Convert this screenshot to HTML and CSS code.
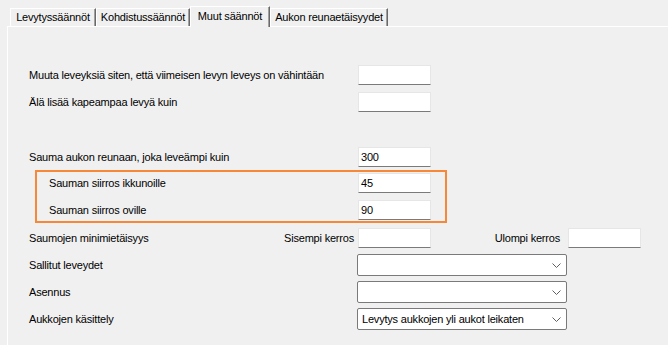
FILE: index.html
```html
<!DOCTYPE html>
<html lang="fi">
<head>
    <meta charset="UTF-8">
    <title>Muut säännöt</title>
    <link rel="stylesheet" href="styles.css">
</head>
<body>
    <div class="tabs">
        <span class="tab t1">Levytyssäännöt</span>
        <span class="tab t2">Kohdistussäännöt</span>
        <span class="tab t3 active">Muut säännöt</span>
        <span class="tab t4">Aukon reunaetäisyydet</span>
    </div>
    <div class="panel">
        <div class="row first">
            <label>Muuta leveyksiä siten, että viimeisen levyn leveys on vähintään</label>
            <input class="field" type="text" value="">
        </div>
        <div class="row">
            <label>Älä lisää kapeampaa levyä kuin</label>
            <input class="field" type="text" value="">
        </div>
        <div class="row spaced">
            <label>Sauma aukon reunaan, joka leveämpi kuin</label>
            <input class="field" type="text" value="300">
        </div>
        <div class="highlight">
            <div class="row inner">
                <label>Sauman siirros ikkunoille</label>
                <input class="field" type="text" value="45">
            </div>
            <div class="row">
                <label>Sauman siirros oville</label>
                <input class="field" type="text" value="90">
            </div>
        </div>
        <div class="row after-box">
            <label class="short">Saumojen minimietäisyys</label>
            <span class="sub sub-in">Sisempi kerros</span>
            <input class="field" type="text" value="">
            <span class="sub sub-out">Ulompi kerros</span>
            <input class="field" type="text" value="">
        </div>
        <div class="row combo-row first-combo">
            <label>Sallitut leveydet</label>
            <div class="combo">
                <span></span>
                <svg width="9" height="5" viewBox="0 0 9 5"><path d="M0.5 0.5 L4.5 4.5 L8.5 0.5" fill="none" stroke="#606060" stroke-width="1"/></svg>
            </div>
        </div>
        <div class="row combo-row">
            <label>Asennus</label>
            <div class="combo">
                <span></span>
                <svg width="9" height="5" viewBox="0 0 9 5"><path d="M0.5 0.5 L4.5 4.5 L8.5 0.5" fill="none" stroke="#606060" stroke-width="1"/></svg>
            </div>
        </div>
        <div class="row combo-row">
            <label>Aukkojen käsittely</label>
            <div class="combo">
                <span>Levytys aukkojen yli aukot leikaten</span>
                <svg width="9" height="5" viewBox="0 0 9 5"><path d="M0.5 0.5 L4.5 4.5 L8.5 0.5" fill="none" stroke="#606060" stroke-width="1"/></svg>
            </div>
        </div>
    </div>
</body>
</html>
```

FILE: styles.css
```css
* {margin: 0; padding: 0; box-sizing: border-box;}
html, body {background: #f0f0f0;}
body {
width: 668px;
height: 345px;
overflow: hidden;
font: 11px "Liberation Sans", Arial, sans-serif;
letter-spacing: -0.2px;
color: #000;
}

/* tab strip */
.tabs {
display: flex;
align-items: flex-end;
height: 26px;
padding-left: 10px;
}
.tab {
height: 18px;
border: 1px solid #fff;
border-bottom: none;
border-right-color: #696969;
box-shadow: inset -1px 0 #a0a0a0;
line-height: 16px;
text-align: center;
white-space: nowrap;
background: #f0f0f0;
}
.tab.t1 {width: 86px;}
.tab.t2 {width: 94px;}
.tab.t3 {width: 80px;}
.tab.t4 {width: 118px;}
.tab.active {
height: 21px;
margin-bottom: -1px;
position: relative;
z-index: 1;
line-height: 19px;
}

/* page body */
.panel {
margin-left: 7px;
height: 330px;
border-top: 1px solid #fff;
border-left: 1px solid #fff;
padding: 38px 0 0 21px;
}
.row {
display: flex;
align-items: center;
height: 20px;
margin-top: 7px;
}
.row.first {margin-top: 0;}
.row.spaced {margin-top: 35px;}
.row label {width: 329px; white-space: nowrap;}
.field {
width: 73px;
height: 20px;
border: 1px solid #e6e6e6;
border-bottom-color: #7a7a7a;
background: #fff;
padding: 0 2px;
font: 11px "Liberation Sans", Arial, sans-serif;
letter-spacing: -0.2px;
color: #000;
outline: none;
}

.highlight {
margin: 3px 0 0 6px;
width: 412px;
border: 2px solid #f68838;
padding: 1px 0 1px 12px;
}
.highlight .row label {width: 309px;}
.highlight .row.inner {margin-top: 0;}

.row.after-box {margin-top: 5px;}
.row label.short {width: 250px;}
.sub {text-align: right; white-space: nowrap;}
.sub-in {width: 75px; margin-right: 4px;}
.sub-out {width: 129px; margin-right: 8px;}

.combo-row {height: 22px; margin-top: 5px;}
.combo-row.first-combo {margin-top: 6px;}
.combo-row label {width: 328px;}
.combo {
width: 210px;
height: 22px;
border: 1px solid #7a7a7a;
border-radius: 2px;
background: #fff;
display: flex;
align-items: center;
justify-content: space-between;
padding: 0 5px 0 4px;
}
```
